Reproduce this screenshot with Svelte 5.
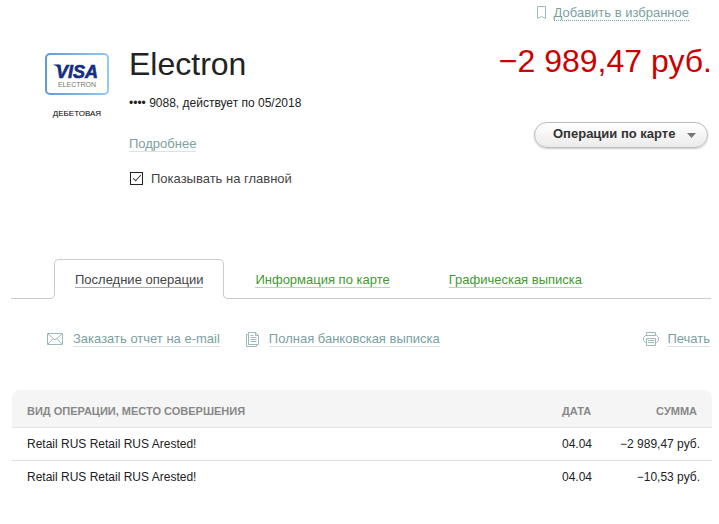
<script>
  let onMain = $state(true);
  const tabs = ['Последние операции', 'Информация по карте', 'Графическая выписка'];
  let active = $state(0);
  const rows = [
    { name: 'Retail RUS Retail RUS Arested!', date: '04.04', sum: '−2 989,47 руб.' },
    { name: 'Retail RUS Retail RUS Arested!', date: '04.04', sum: '−10,53 руб.' }
  ];
</script>

<main class="page">
  <header class="top">
    <a class="tool favorite" href="#favorite">
      <svg width="10" height="14" viewBox="0 0 10 14"><path d="M1.500.500h8v12L5.500 10.500 1.500 12.500z" /></svg>
      <span class="link dotted">Добавить в избранное</span>
    </a>
  </header>

  <section class="card">
    <div class="logo-col">
      <svg class="logo" width="64" height="42" viewBox="0 0 64 42" role="img" aria-label="Visa Electron">
        <defs>
          <linearGradient id="edge" x1="0" x2="1"><stop stop-color="#609bd6" /><stop offset="1" stop-color="#92caf2" /></linearGradient>
        </defs>
        <rect x="1" y="1" width="62" height="40" rx="4" fill="#fffefa" stroke="url(#edge)" stroke-width="2" />
        <text class="visa" x="11" y="25">VISA</text>
        <path class="wing" d="M8.500 11.500h5q1.300 0 1.500 1.200L16.500 20C15 16 12.500 13 8.500 12z" />
        <text class="electron" x="32" y="34" text-anchor="middle">ELECTRON</text>
      </svg>
      <div class="kind">ДЕБЕТОВАЯ</div>
    </div>
    <div class="info">
      <h1>Electron</h1>
      <p class="number">•••• 9088, действует по 05/2018</p>
      <a class="more" href="#details"><span class="link">Подробнее</span></a>
      <label class="check"><input type="checkbox" bind:checked={onMain} /><span>Показывать на главной</span></label>
    </div>
    <div class="balance">
      <div class="amount">−2 989,47 руб.</div>
      <button class="ops" type="button">Операции по карте
        <svg width="9" height="5" viewBox="0 0 9 5"><path d="M0 0h9L4.500 5z" /></svg>
      </button>
    </div>
  </section>

  <nav class="tabs">
    {#each tabs as tab, i}
      <button type="button" class="tab" class:active={active === i} onclick={() => (active = i)}><span>{tab}</span></button>
    {/each}
  </nav>

  <div class="tools">
    <a class="tool" href="#email">
      <svg width="16" height="12" viewBox="0 0 16 12"><path d="M.5.500h15v11H.5zM1 1l7 6 7-6M1 11l5-5.500M15 11l-5-5.500" /></svg>
      <span class="link">Заказать отчет на e-mail</span>
    </a>
    <a class="tool" href="#statement">
      <svg width="13" height="15" viewBox="0 0 13 15"><path d="M2.500.500h7l3 3v9h-10zM9.500.500v3h3M2.500 2.500H.5v12h10v-2M4.500 3.500h3M4.500 5.500h6M4.500 7.500h6M4.500 9.500h6" /></svg>
      <span class="link">Полная банковская выписка</span>
    </a>
    <a class="tool print" href="#print">
      <svg width="16" height="14" viewBox="0 0 16 14"><path d="M3.500 3V.5h9V3M3.500 10.500h-1l-2-2v-3l2-2h11l2 2v3l-2 2h-1M3.500 6.500h9v7h-9zM5 8.500h6M5 10.500h6" /></svg>
      <span class="link">Печать</span>
    </a>
  </div>

  <table>
    <thead>
      <tr><th>ВИД ОПЕРАЦИИ, МЕСТО СОВЕРШЕНИЯ</th><th class="date">ДАТА</th><th class="sum">СУММА</th></tr>
    </thead>
    <tbody>
      {#each rows as row}
        <tr><td>{row.name}</td><td class="date">{row.date}</td><td class="sum">{row.sum}</td></tr>
      {/each}
    </tbody>
  </table>
</main>

<style>
  :global(body) {
    margin: 0;
    background: #fff;
  }
  .page {
    padding: 4px 7px 0 12px;
    font: 12px/16px "Liberation Sans", Arial, sans-serif;
    color: #222;
  }
  .top {
    display: flex;
    justify-content: flex-end;
    padding-right: 23px;
    height: 18px;
  }
  .tool {
    display: flex;
    align-items: center;
    gap: 10px;
    text-decoration: none;
  }
  .favorite,
  .print {
    gap: 8px;
  }
  .tool svg {
    flex: none;
    fill: none;
    stroke: #9dbab8;
  }
  .link {
    font-size: 13px;
    line-height: 15px;
    color: #7ba19f;
    border-bottom: 1px solid #d8e3e2;
  }
  .dotted {
    border-bottom: 1px dotted #7ba19f;
  }
  .card {
    display: flex;
    align-items: flex-start;
    padding: 21px 0 0 33px;
  }
  .logo-col {
    display: flex;
    flex-direction: column;
    align-items: center;
    width: 64px;
    padding-top: 10px;
  }
  .visa {
    font-size: 18px;
    font-weight: bold;
    font-style: italic;
    fill: #152e85;
    stroke: #152e85;
    stroke-width: 0.6;
  }
  .wing {
    fill: #152e85;
  }
  .electron {
    font-size: 7px;
    fill: #777;
  }
  .kind {
    margin-top: 11px;
    font-size: 8px;
    color: #000;
  }
  .info {
    flex: 1;
    display: flex;
    flex-direction: column;
    align-items: flex-start;
    padding-left: 20px;
  }
  h1 {
    margin: 0;
    font-size: 32px;
    line-height: 42px;
    font-weight: normal;
  }
  .number {
    margin: 10px 0 25px;
  }
  .more {
    display: flex;
    text-decoration: none;
  }
  .check {
    display: flex;
    align-items: center;
    gap: 8px;
    margin-top: 19px;
    font-size: 13px;
    color: #444;
  }
  .check input {
    box-sizing: border-box;
    appearance: none;
    margin: 0 0 2px 1px;
    width: 13px;
    height: 13px;
    border: 1px solid #222;
    background: #fff;
    position: relative;
  }
  .check input:checked::after {
    content: "";
    position: absolute;
    left: 4px;
    top: 0;
    width: 3px;
    height: 7px;
    border: solid #333;
    border-width: 0 1px 1px 0;
    transform: rotate(42deg);
  }
  .balance {
    display: flex;
    flex-direction: column;
    align-items: flex-end;
  }
  .amount {
    font-size: 32px;
    line-height: 36px;
    color: #c00;
  }
  .ops {
    display: flex;
    align-items: center;
    gap: 8px;
    height: 26px;
    margin: 43px 4px 0 0;
    padding: 0 11px 2px 18px;
    min-width: 174px;
    border: 1px solid #bbb;
    border-radius: 13px;
    background: linear-gradient(#fff, #ebebeb);
    box-shadow: 0 1px 2px #ccc;
    font: bold 13px/16px "Liberation Sans", Arial, sans-serif;
    color: #333;
  }
  .ops svg {
    fill: #777;
    margin: 3px 0 0 auto;
  }
  .tabs {
    display: flex;
    margin: 72px 1px 0 -1px;
    padding-left: 43px;
    border-bottom: 1px solid #ccc;
  }
  .tab {
    height: 39px;
    padding: 2px 30px 0 29px;
    border: 0;
    background: none;
    font: 13px/15px "Liberation Sans", Arial, sans-serif;
    color: #3f9a2f;
  }
  .tab span {
    display: inline-block;
    border-bottom: 1px solid #b9d6b3;
  }
  .tab.active {
    position: relative;
    height: 40px;
    margin: 0 2px -1px 0;
    padding: 1px 20px 0;
    border: 1px solid #ccc;
    border-bottom: 0;
    border-radius: 5px 5px 0 0;
    background: #fff;
    color: #444;
  }
  .tab.active span {
    border-color: #aaa;
  }
  .tab.active::before,
  .tab.active::after {
    content: "";
    position: absolute;
    bottom: 0;
    width: 4px;
    height: 4px;
    border: 0 solid #ccc;
    border-bottom-width: 1px;
  }
  .tab.active::before {
    left: -5px;
    border-right-width: 1px;
    border-bottom-right-radius: 5px;
    box-shadow: 2px 2px 0 #fff;
  }
  .tab.active::after {
    right: -5px;
    border-left-width: 1px;
    border-bottom-left-radius: 5px;
    box-shadow: -2px 2px 0 #fff;
  }
  .tools {
    display: flex;
    gap: 26px;
    padding: 32px 2px 0 35px;
  }
  .print {
    margin-left: auto;
  }
  table {
    width: 100%;
    margin-top: 43px;
    border-spacing: 0;
  }
  th {
    height: 38px;
    padding: 4px 0 0;
    box-sizing: border-box;
    background: #f5f5f5;
    font-size: 11px;
    text-align: left;
    color: #888;
    border-bottom: 1px solid #e4e4e4;
  }
  td {
    height: 32px;
    padding: 0;
    color: #222;
  }
  tbody tr:not(:last-child) td {
    border-bottom: 1px solid #ddd;
  }
  th:first-child,
  td:first-child {
    padding-left: 15px;
  }
  th:first-child {
    border-top-left-radius: 8px;
  }
  th:last-child {
    border-top-right-radius: 8px;
    padding-right: 15px;
  }
  td:last-child {
    padding-right: 12px;
  }
  .date {
    width: 40px;
  }
  .sum {
    width: 110px;
    box-sizing: border-box;
    text-align: right;
  }
</style>
